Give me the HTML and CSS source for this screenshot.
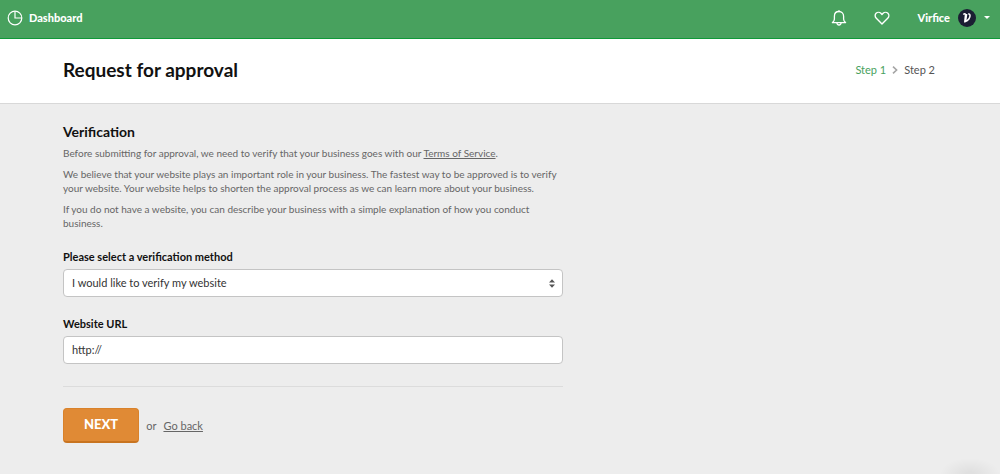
FILE: index.html
```html
<!DOCTYPE html>
<html lang="en">
<head>
    <meta charset="UTF-8">
    <meta name="viewport" content="width=device-width, initial-scale=1.0">
    <title>Request for approval</title>
    <link rel="stylesheet" href="styles.css">
</head>
<body>
<header class="topbar">
    <a class="topbar-link" href="#">
        <svg class="icon-dashboard" width="16" height="16" viewBox="0 0 16 16" fill="none" stroke="#fff" stroke-width="1.2">
            <circle cx="8" cy="8" r="6.8"/>
            <path d="M8 1.2V8h6.8"/>
        </svg>
        Dashboard
    </a>
    <nav class="topbar-actions">
        <button class="icon-button" type="button" aria-label="Notifications">
            <svg width="16" height="16" viewBox="0 0 16 16" fill="none" stroke="#fff" stroke-width="1.3" stroke-linejoin="round" stroke-linecap="round">
                <path d="M1.4 12.6h13.2c-1.3-.9-2-1.9-2-3.5V6.2C12.6 3.5 10.8 1.5 8 1.5S3.4 3.5 3.4 6.2v2.9c0 1.6-.7 2.6-2 3.5z"/>
                <path d="M5.9 12.8c.1 1.4.9 2.2 2.1 2.2s2-.8 2.1-2.2M8 .7v.8"/>
            </svg>
        </button>
        <button class="icon-button" type="button" aria-label="Favourites">
            <svg width="16" height="16" viewBox="0 0 16 16" fill="none" stroke="#fff" stroke-width="1.4" stroke-linejoin="round">
                <path d="M8 14 2.3 8.3C.8 6.8.8 4.6 2.1 3.3s3.5-1.3 4.8 0L8 4.5l1.1-1.2c1.3-1.3 3.5-1.3 4.8 0s1.3 3.5-.2 5z"/>
            </svg>
        </button>
        <button class="account" type="button">
            Virfice
            <svg class="avatar" width="18" height="18" viewBox="0 0 18 18">
                <circle cx="9" cy="9" r="9" fill="#1b1e33"/>
                <path d="M5.3 5.5c1-.9 2.4-1 2.2.3L6.8 12.9c3.4-1.5 5.4-4.1 5.2-6.6-.1-1-.9-1.5-1.8-1.2M8.6 4.8 7.6 12.5" fill="none" stroke="#fff" stroke-width="1.5" stroke-linejoin="round"/>
            </svg>
            <span class="caret"></span>
        </button>
    </nav>
</header>

<div class="page-header">
    <h1>Request for approval</h1>
    <div class="steps">
        <span class="step-active">Step 1</span>
        <svg width="6" height="8" viewBox="0 0 6 8" fill="none" stroke="#a5a5a5" stroke-width="1.6">
            <path d="M1 .6 4.6 4 1 7.4"/>
        </svg>
        <span class="step">Step 2</span>
    </div>
</div>

<main class="content">
    <form class="approval-form">
        <h2>Verification</h2>
        <p>Before submitting for approval, we need to verify that your business goes with our <a href="#">Terms of Service</a>.</p>
        <p>We believe that your website plays an important role in your business. The fastest way to be approved is to verify your website. Your website helps to shorten the approval process as we can learn more about your business.</p>
        <p>If you do not have a website, you can describe your business with a simple explanation of how you conduct business.</p>

        <div class="field">
            <label for="method">Please select a verification method</label>
            <div class="select-wrap">
                <select id="method" name="method">
                    <option>I would like to verify my website</option>
                </select>
                <svg class="select-arrows" width="6" height="9" viewBox="0 0 6 9" fill="#555">
                    <path d="M0 3.5 3 .3l3 3.2zM0 5.5l3 3.2 3-3.2z"/>
                </svg>
            </div>
        </div>

        <div class="field">
            <label for="url">Website URL</label>
            <input type="text" id="url" name="url" value="http://">
        </div>

        <div class="form-actions">
            <button class="next-button" type="submit">NEXT</button>
            <span>or</span>
            <a href="#">Go back</a>
        </div>
    </form>
</main>
<div class="corner-shadow"></div>
</body>
</html>
```
FILE: styles.css
```css
* {
    box-sizing: border-box;
}
body {
    margin: 0;
    min-height: 100vh;
    background-color: #ededed;
    color: #666;
    font-family: Lato, "Open Sans", sans-serif;
    font-size: 11px;
    line-height: 14px;
}
button, input, select {
    font-family: inherit;
}
h1, h2, p {
    margin: 0;
}
.topbar {
    display: flex;
    justify-content: space-between;
    align-items: center;
    height: 39px;
    padding: 0 10px 3px 7px;
    background-color: #48a15e;
    border-bottom: 1px solid #0f9938;
}
.topbar-link {
    display: flex;
    align-items: center;
    gap: 6px;
    color: #fff;
    font-weight: 900;
    text-decoration: none;
}
.topbar-actions {
    display: flex;
    align-items: center;
    gap: 27px;
}
.icon-button, .account {
    display: flex;
    align-items: center;
    padding: 0;
    border: none;
    background: none;
    color: #fff;
    cursor: pointer;
}
.account {
    gap: 8px;
    font-size: 11px;
    font-weight: 900;
}
.caret {
    border: 3px solid transparent;
    border-top-color: #fff;
    border-bottom: none;
}
.page-header {
    display: flex;
    justify-content: space-between;
    align-items: center;
    height: 65px;
    padding: 0 65px 2px 63px;
    background-color: #fff;
    border-bottom: 1px solid #d8d8d8;
}
h1 {
    color: #111;
    font-size: 19px;
    line-height: 24px;
}
.steps {
    display: flex;
    align-items: center;
    gap: 6px;
    color: #555;
}
.step-active {
    color: #48a15e;
}
.content {
    padding: 19px 63px;
}
.approval-form {
    max-width: 500px;
}
h2 {
    margin-bottom: 5px;
    color: #111;
    font-size: 14px;
    line-height: 18px;
}
p {
    margin-bottom: 7px;
    font-size: 10px;
}
a {
    color: #666;
}
.field {
    margin-top: 20px;
}
label {
    display: block;
    margin-bottom: 5px;
    color: #111;
    font-weight: bold;
}
.select-wrap {
    position: relative;
}
input, select {
    display: block;
    width: 100%;
    height: 28px;
    padding: 0 8px 2px;
    border: 1px solid #c4c4c4;
    border-radius: 4px;
    background-color: #fff;
    color: #333;
    font-size: 11px;
    appearance: none;
}
.select-arrows {
    position: absolute;
    top: 10px;
    right: 8px;
    pointer-events: none;
}
.form-actions {
    display: flex;
    align-items: center;
    gap: 7px;
    margin-top: 22px;
    padding-top: 21px;
    border-top: 1px solid #dcdcdc;
}
.next-button {
    height: 35px;
    padding: 0 20px 2px;
    border: 1px solid #d9822b;
    border-bottom: 2px solid #c87420;
    border-radius: 4px;
    background-color: #e08a35;
    color: #fff;
    font-size: 13px;
    font-weight: 900;
    cursor: pointer;
}
.corner-shadow {
    position: fixed;
    right: 0;
    bottom: 0;
    width: 60px;
    height: 16px;
    background: radial-gradient(ellipse at bottom, rgba(0, 0, 0, 0.06), transparent 70%);
    pointer-events: none;
}
```
